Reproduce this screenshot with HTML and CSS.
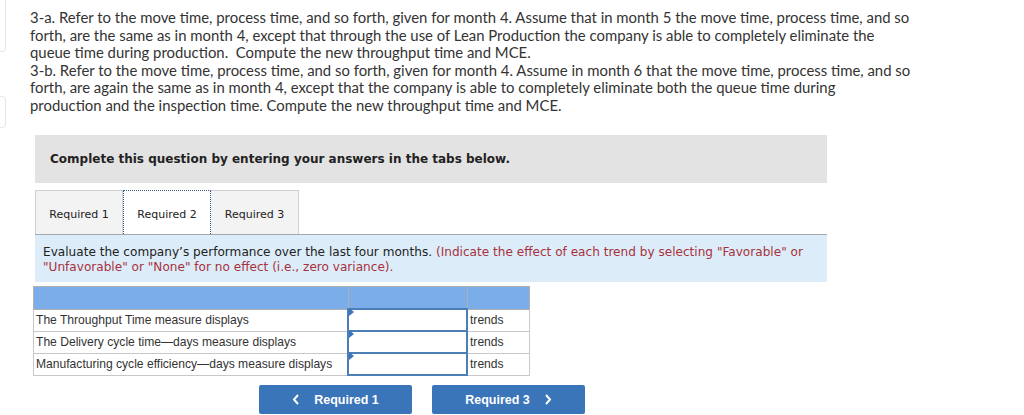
FILE: index.html
```html
<!DOCTYPE html>
<html>
<head>
<meta charset="utf-8">
<link rel="stylesheet" href="styles.css">
</head>
<body>
<div class="edge edge-top"></div>
<div class="edge edge-bottom"></div>
<div class="page">
  <div class="question">
    <p>3-a. Refer to the move time, process time, and so forth, given for month 4. Assume that in month 5 the move time, process time, and so forth, are the same as in month 4, except that through the use of Lean Production the company is able to completely eliminate the queue time during production.&nbsp; Compute the new throughput time and MCE.</p>
    <p>3-b. Refer to the move time, process time, and so forth, given for month 4. Assume in month 6 that the move time, process time, and so forth, are again the same as in month 4, except that the company is able to completely eliminate both the queue time during<br>production and the inspection time. Compute the new throughput time and MCE.</p>
  </div>
  <div class="panel">
    <div class="banner">Complete this question by entering your answers in the tabs below.</div>
    <div class="tabs">
      <div class="tab">Required 1</div>
      <div class="tab active">Required 2</div>
      <div class="tab">Required 3</div>
    </div>
    <div class="info">Evaluate the company’s performance over the last four months. <span class="hint">(Indicate the effect of each trend by selecting "Favorable" or "Unfavorable" or "None" for no effect (i.e., zero variance).</span></div>
  </div>
  <table class="grid">
    <tr class="head"><th class="c1"></th><th class="c2"></th><th class="c3"></th></tr>
    <tr><td class="c1">The Throughput Time measure displays</td><td class="c2 input"><span class="flag"></span></td><td class="c3">trends</td></tr>
    <tr><td class="c1">The Delivery cycle time—days measure displays</td><td class="c2 input"><span class="flag"></span></td><td class="c3">trends</td></tr>
    <tr><td class="c1">Manufacturing cycle efficiency—days measure displays</td><td class="c2 input"><span class="flag"></span></td><td class="c3">trends</td></tr>
  </table>
  <div class="nav">
    <button class="btn"><svg class="chev" width="8" height="11" viewBox="0 0 8 11"><polyline points="6,1 2,5.5 6,10" fill="none" stroke="#fff" stroke-width="2"/></svg><span>Required 1</span></button>
    <button class="btn"><span>Required 3</span><svg class="chev" width="8" height="11" viewBox="0 0 8 11"><polyline points="2,1 6,5.5 2,10" fill="none" stroke="#fff" stroke-width="2"/></svg></button>
  </div>
</div>
</body>
</html>
```
FILE: styles.css
```css
html, body { margin: 0; padding: 0; background: #fff; }
body { width: 1024px; height: 415px; overflow: hidden; position: relative; }
.edge { position: absolute; left: -10px; width: 14px; border: 1px solid #e6e6e6; border-radius: 4px; }
.edge-top { top: -10px; height: 60px; }
.edge-bottom { top: 96px; height: 30px; }
.page { padding: 9px 0 0 30px; }
.question { width: 882px; font-family: "Lato", "Liberation Sans", sans-serif; font-size: 14.9px; line-height: 17.5px; color: #333; }
.question p { margin: 0; }
.panel { margin: 21px 0 0 5px; width: 792px; }
.banner { background: #e3e3e3; height: 48px; box-sizing: border-box; padding: 0 0 0 15px; display: flex; align-items: center; font-family: "DejaVu Sans", Verdana, sans-serif; font-weight: bold; font-size: 12px; color: #222; }
.tabs { display: flex; margin-top: 7px; border-bottom: 1px solid #a8a8a8; height: 44px; }
.tab { width: 88px; box-sizing: border-box; border: 1px solid #d0d0d0; border-bottom: none; background: #f3f3f3; display: flex; justify-content: center; padding-top: 16px; font-family: "DejaVu Sans", Verdana, sans-serif; font-size: 11px; line-height: 16px; color: #222; }
.tab + .tab { border-left: none; }
.tab.active { background: #fff; border: 1px dotted #3a5a88; border-bottom: none; }
.info { background: #dcedf9; padding: 10px 8px 7px 8px; font-family: "DejaVu Sans", Verdana, sans-serif; font-size: 12.1px; line-height: 15px; color: #222; }
.hint { color: #a8313d; }
.grid { margin: 4px 0 0 3px; border-collapse: collapse; font-family: "Liberation Sans", Arial, sans-serif; font-size: 12.1px; color: #333; }
.grid td, .grid th { border: 1px solid #c8c8c8; padding: 0 2px; height: 20px; }
.grid .head th { background: #7badea; border-color: #b0b0b0; height: 21px; }
.c1 { width: 309px; }
.c2 { width: 113px; }
.c3 { width: 57px; }
.grid td.input { position: relative; border: 2px solid #4c7fb8; }
.flag { position: absolute; left: 0; width: 0; height: 0; border-top: 4px solid transparent; border-bottom: 4px solid transparent; border-left: 5px solid #3b74bc; top: -2px; }
.nav { display: flex; gap: 20px; margin: 9px 0 0 229px; }
.btn { width: 153px; height: 29px; background: #3a74b9; border: none; border-radius: 2px; color: #fff; font-family: "Liberation Sans", Arial, sans-serif; font-weight: bold; font-size: 12.5px; display: flex; align-items: center; justify-content: center; gap: 14px; padding: 0; }
.chev { display: block; }
```
